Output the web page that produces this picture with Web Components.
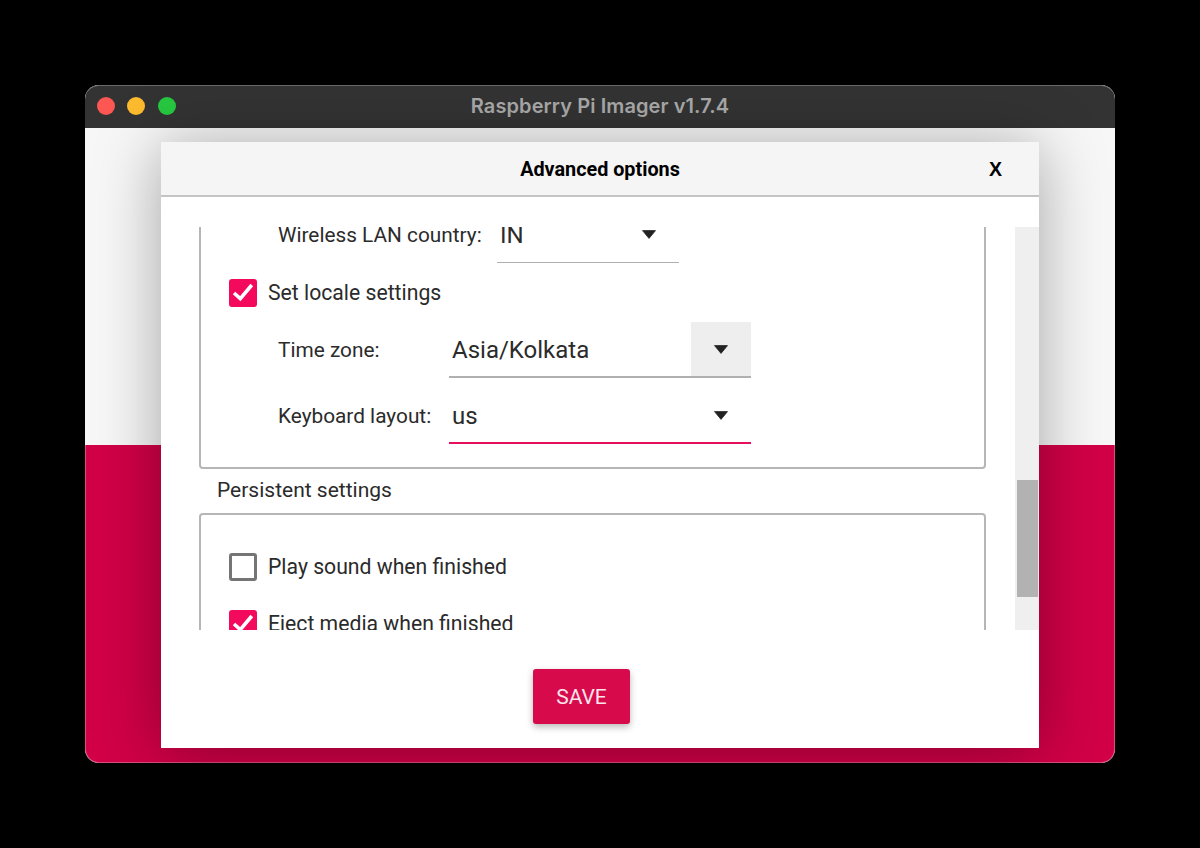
<!DOCTYPE html>
<html><head><meta charset="utf-8">
<style>
html,body{margin:0;background:#000;height:848px;overflow:hidden}
body{padding:85px;box-sizing:border-box;font-family:Roboto,sans-serif;color:#2b2b2b}
</style></head><body>
<pi-window title-text="Raspberry Pi Imager v1.7.4">
  <pi-dialog heading="Advanced options">
    <pi-group>
      <pi-row label="Wireless LAN country:" label-width="219"><pi-combo width="182" value="IN" small></pi-combo></pi-row>
      <pi-check checked>Set locale settings</pi-check>
      <pi-row label="Time zone:" label-width="171"><pi-combo width="302" value="Asia/Kolkata" hover></pi-combo></pi-row>
      <pi-row label="Keyboard layout:" label-width="171"><pi-combo width="302" value="us" focus></pi-combo></pi-row>
    </pi-group>
    <pi-heading>Persistent settings</pi-heading>
    <pi-group second>
      <pi-check>Play sound when finished</pi-check>
      <pi-check checked>Eject media when finished</pi-check>
    </pi-group>
  </pi-dialog>
</pi-window>
<script>
function def(name, css, html, init){
  customElements.define(name, class extends HTMLElement{
    connectedCallback(){
      if(this.shadowRoot) return;
      const r=this.attachShadow({mode:'open'});
      r.innerHTML='<style>'+css+'</style>'+(typeof html==='function'?html(this):html);
      if(init) init(this,r);
    }
  });
}
const esc=s=>s||'';
def('pi-window',`
:host{display:block;width:1030px;height:678px;position:relative;border-radius:14px;overflow:hidden;background:#f7f7f7}
.bar{height:43px;box-sizing:border-box;background:#333;border-top:1px solid #6a6a6a;border-radius:14px 14px 0 0;display:flex;align-items:center;justify-content:center;position:relative}
.lights{position:absolute;left:12px;top:11px;display:flex;gap:12px}
.lights i{width:18px;height:18px;border-radius:50%;display:block}
.lights i:last-child{margin-left:1px}
.t{font:600 20px Inter,sans-serif;color:#a9a9a9;letter-spacing:.1px;margin-top:-3px}
.top{height:317px;background:#f7f7f7}
.bottom{height:318px;box-sizing:border-box;background:#d20047;border:solid #d8507c;border-width:0 1px 1px 1px;border-radius:0 0 14px 14px;margin-top:0}
`,h=>`<div class="bar"><div class="lights"><i style="background:#fc5753"></i><i style="background:#fdbc2e"></i><i style="background:#27c840"></i></div><div class="t">${esc(h.getAttribute('title-text'))}</div></div><div class="top"></div><div class="bottom"></div><slot></slot>`);
def('pi-dialog',`
:host{position:absolute;left:76px;top:57px;width:878px;height:606px;background:#fff;display:flex;flex-direction:column;box-shadow:0 5px 60px rgba(0,0,0,.34)}
.head{height:55px;box-sizing:border-box;background:#f5f5f5;border-bottom:2px solid #c4c4c4;display:flex;align-items:center;justify-content:center;position:relative;font:700 19.8px Roboto,sans-serif;color:#000}
.head span{position:relative;top:1px}
.head b{position:absolute;left:828px;top:16px;font:700 19.5px "Liberation Sans",sans-serif;color:#000}
.body{display:flex;height:403px;margin-top:30px}
.view{width:854px;box-sizing:border-box;padding-left:38px;overflow:hidden}
.inner{width:787px;margin-top:-22px}
.track{width:24px;background:#efefef;position:relative}
.thumb{position:absolute;left:2px;right:1px;top:253px;height:117px;background:#b2b2b2}
.foot{flex:1;display:flex;justify-content:flex-start;padding:39px 0 0 372px;box-sizing:border-box}
button{width:97px;height:55px;border:0;border-radius:3px;background:#d70a4c;color:#fbe4ec;font:400 21px Roboto,sans-serif;padding:0;box-shadow:0 3px 7px rgba(0,0,0,.28)}
`,h=>`<div class="head"><span>${esc(h.getAttribute('heading'))}</span><b>X</b></div><div class="body"><div class="view"><div class="inner"><slot></slot></div></div><div class="track"><div class="thumb"></div></div></div><div class="foot"><button>SAVE</button></div>`);
def('pi-group',`
:host{display:flex;flex-direction:column;gap:10px;box-sizing:border-box;border:2px solid #b6b6b6;border-radius:4px;padding:0 0 23px 28px;width:787px}
:host([second]){gap:18px;padding-top:32px;padding-bottom:0;height:200px}
`,`<slot></slot>`);
def('pi-heading',`
:host{display:flex;align-items:center;height:44px;box-sizing:border-box;padding:0 0 2px 18px;font:400 21px Roboto,sans-serif;color:#2b2b2b}
`,`<slot></slot>`);
def('pi-row',`
:host{display:flex;align-items:center;height:56px;padding-left:49px;font:400 20.8px Roboto,sans-serif;color:#2b2b2b}
.l{flex:none}
`,h=>`<div class="l" style="width:${h.getAttribute('label-width')}px"><span>${esc(h.getAttribute('label'))}</span></div><slot></slot>`);
def('pi-combo',`
:host{display:block;height:56px;flex:none;position:relative;box-sizing:border-box;border-bottom:2px solid #b0b0b0;font:400 24px Roboto,sans-serif;color:#2b2b2b}
:host([small]){border-bottom-width:1.5px}
:host([focus]){border-bottom-color:#e5105c}
.v{position:absolute;left:3px;top:1px;bottom:0;display:flex;align-items:center}
.ind{position:absolute;right:0;top:0;bottom:0;width:60px;display:flex;align-items:center;justify-content:center}
:host([hover]) .ind{background:#eee}
svg{width:16px;height:9px;display:block}
`,h=>{h.style.width=h.getAttribute('width')+'px';return `<div class="v">${esc(h.getAttribute('value'))}</div><div class="ind"><svg viewBox="0 0 16 9"><path d="M1.5 .6H14.5L8 8.4Z" fill="#222" stroke="#222" stroke-width=".8" stroke-linejoin="round"/></svg></div>`});
def('pi-check',`
:host{display:flex;align-items:center;height:39px;font:400 21.2px Roboto,sans-serif;color:#2b2b2b}
.b{width:28px;height:28px;box-sizing:border-box;border-radius:3px;border:3px solid #757575;margin-right:11px;flex:none;background:#fff}
:host([checked]) .b{background:#f30a5c;border:0}
svg{display:block;width:28px;height:28px}
`,h=>`<div class="b">${h.hasAttribute('checked')?'<svg viewBox="0 0 28 28"><path d="M5 14L11.3 19.6L22.8 6" fill="none" stroke="#fff" stroke-width="3.6"/></svg>':''}</div><span><slot></slot></span>`);
</script>
</body></html>
